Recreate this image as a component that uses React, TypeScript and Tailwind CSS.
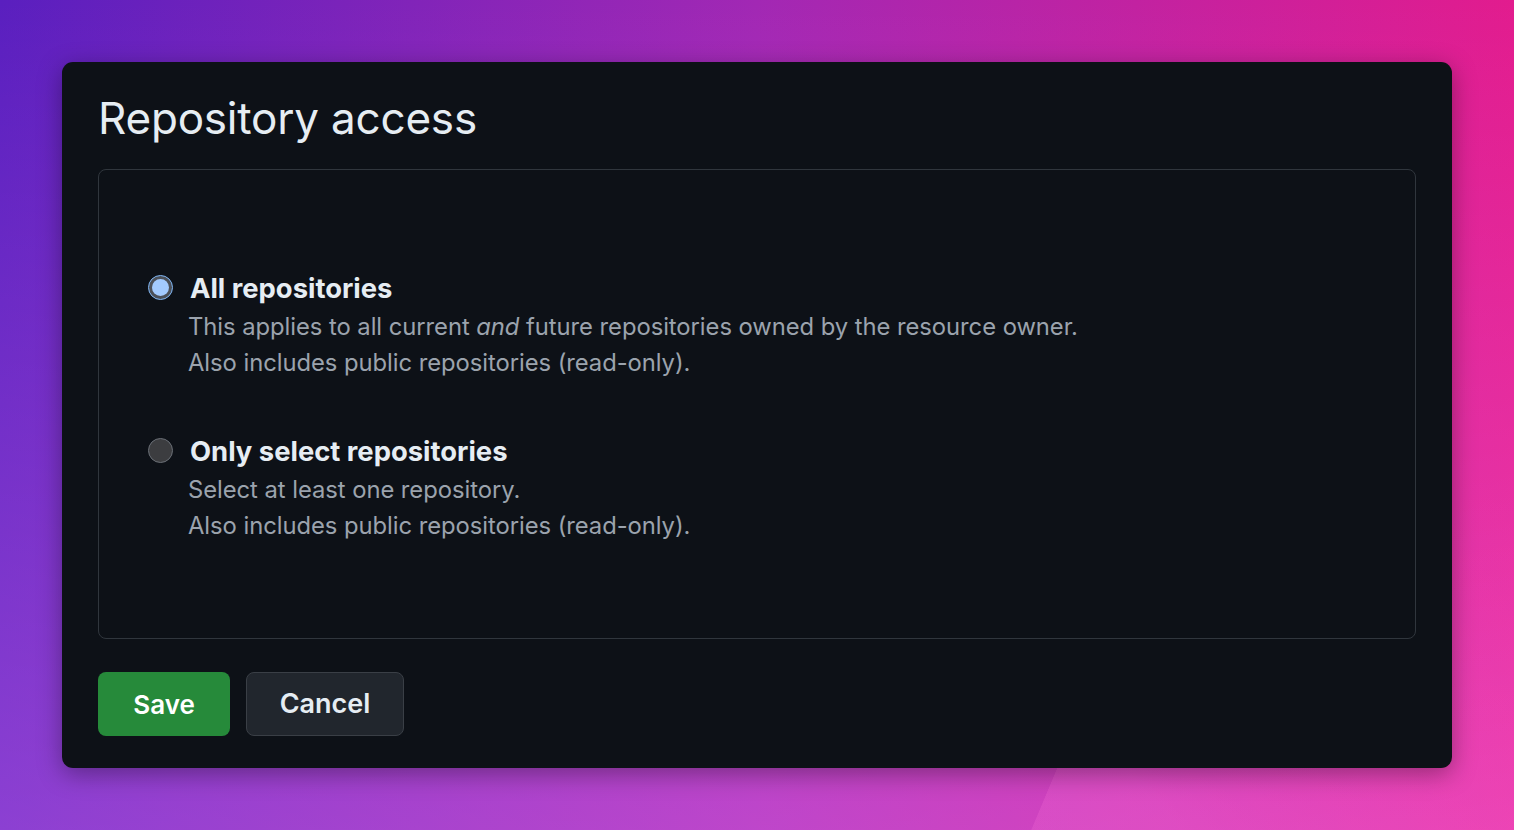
import React from "react";

function Radio({ checked }: { checked: boolean }) {
  if (checked) {
    return (
      <div className="flex h-[25px] w-[25px] shrink-0 items-center justify-center rounded-full border border-[#7fb6f5] bg-[#4b5058]">
        <div className="h-[17px] w-[17px] rounded-full bg-[#a3cbff]" />
      </div>
    );
  }
  return <div className="h-[25px] w-[25px] shrink-0 rounded-full border-[1.5px] border-[#6a6f76] bg-[#3c3d40]" />;
}

function Option({ checked, label, lines }: { checked: boolean; label: string; lines: React.ReactNode[] }) {
  return (
    <div className="flex flex-col">
      <div className="flex items-center gap-[17px]">
        <Radio checked={checked} />
        <div className="text-[27.4px] font-bold leading-[34px] text-[#e6edf3]">{label}</div>
      </div>
      <div className="mt-[4px] pl-[40px] text-[23.8px] leading-[36px] tracking-[-0.05px] text-[#9ba3ad]">
        {lines.map((l, i) => (
          <div key={i}>{l}</div>
        ))}
      </div>
    </div>
  );
}

export default function App() {
  return (
    <div
      className="flex h-[830px] w-[1514px] items-start justify-center overflow-hidden pt-[62px] bg-[conic-gradient(from_0deg_at_1080px_714px,rgba(255,120,220,0)_0deg,rgba(255,120,220,0)_60deg,rgba(255,120,220,0.2)_140deg,rgba(255,120,220,0.2)_202.6deg,rgba(255,120,220,0)_203deg),linear-gradient(to_bottom,rgba(255,140,255,0)_0%,rgba(255,140,255,0.3)_100%),linear-gradient(to_right,#5a1fbf_0%,#a228b4_50%,#e21c8e_100%)]"
      style={{ fontFamily: "Inter, 'Liberation Sans', sans-serif" }}
    >
      <div className="flex h-[706px] w-[1390px] flex-col rounded-[11px] bg-[#0d1117] px-[36px] shadow-[0_6px_24px_rgba(0,0,0,0.35)]">
        <h1 className="mt-[28px] text-[44px] font-normal leading-[56px] tracking-[-0.2px] text-[#e6edf3]">Repository access</h1>
        <div className="mt-[23px] flex h-[470px] flex-col justify-center gap-[53px] rounded-[8px] border border-[#30363d] pl-[49px] pt-[6px]">
          <Option
            checked
            label="All repositories"
            lines={[
              <>
                This applies to all current <em>and</em> future repositories owned by the resource owner.
              </>,
              "Also includes public repositories (read-only).",
            ]}
          />
          <Option
            checked={false}
            label="Only select repositories"
            lines={["Select at least one repository.", "Also includes public repositories (read-only)."]}
          />
        </div>
        <div className="mt-[33px] flex gap-[16px]">
          <button className="flex h-[64px] w-[132px] items-center justify-center rounded-[8px] bg-[#268a3a] text-[26px] font-semibold text-white">
            Save
          </button>
          <button className="flex h-[64px] w-[158px] items-center justify-center rounded-[8px] border border-[#3a3f46] bg-[#21262d] text-[27px] font-semibold text-[#e6edf3]">
            Cancel
          </button>
        </div>
      </div>
    </div>
  );
}
